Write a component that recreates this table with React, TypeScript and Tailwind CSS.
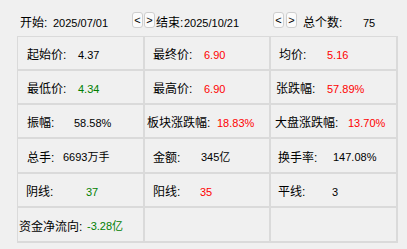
import React from 'react'

interface CellProps {
  label?: string
  value?: string
  color?: string
  pad?: string
  lw?: string
}

const RED = 'text-[#ff0000]'
const GREEN = 'text-[#008000]'
const BLACK = 'text-black'

const cells: CellProps[] = [
  { label: '起始价:', value: '4.37', color: BLACK, pad: 'pl-[9px]', lw: 'w-[51px]' },
  { label: '最终价:', value: '6.90', color: RED, pad: 'pl-[8px]', lw: 'w-[51px]' },
  { label: '均价:', value: '5.16', color: RED, pad: 'pl-[8px]', lw: 'w-[48px]' },

  { label: '最低价:', value: '4.34', color: GREEN, pad: 'pl-[9px]', lw: 'w-[51px]' },
  { label: '最高价:', value: '6.90', color: RED, pad: 'pl-[8px]', lw: 'w-[51px]' },
  { label: '张跌幅:', value: '57.89%', color: RED, pad: 'pl-[5px]', lw: 'w-[51px]' },

  { label: '振幅:', value: '58.58%', color: BLACK, pad: 'pl-[9px]', lw: 'w-[47px]' },
  { label: '板块涨跌幅:', value: '18.83%', color: RED, pad: 'pl-[2px]', lw: 'w-[70px]' },
  { label: '大盘涨跌幅:', value: '13.70%', color: RED, pad: 'pl-[4px]', lw: 'w-[73px]' },

  { label: '总手:', value: '6693万手', color: BLACK, pad: 'pl-[9px]', lw: 'w-[36px]' },
  { label: '金额:', value: '345亿', color: BLACK, pad: 'pl-[8px]', lw: 'w-[48px]' },
  { label: '换手率:', value: '147.08%', color: BLACK, pad: 'pl-[7px]', lw: 'w-[55px]' },

  { label: '阴线:', value: '37', color: GREEN, pad: 'pl-[8px]', lw: 'w-[60px]' },
  { label: '阳线:', value: '35', color: RED, pad: 'pl-[8px]', lw: 'w-[47px]' },
  { label: '平线:', value: '3', color: BLACK, pad: 'pl-[7px]', lw: 'w-[54px]' },

  { label: '资金净流向:', value: '-3.28亿', color: GREEN, pad: 'pl-[1px]', lw: 'w-[68px]' },
  {},
  {},
]

const Cell = ({ c }: { c: CellProps }) => (
  <div className={`flex items-center pt-[4px] border border-[#dadada] whitespace-nowrap ${c.pad ?? ''}`}>
    {c.label && <span className={`${c.lw} shrink-0 text-[12px]`}>{c.label}</span>}
    {c.value && <span className={`text-[11px] ${c.color}`}>{c.value}</span>}
  </div>
)

const Arrow = ({ ch }: { ch: string }) => (
  <div className="mt-[12px] flex h-[16px] w-[11px] items-center justify-center rounded-[3px] border border-[#cfcfcf] bg-[#fbfbfb] text-[11px] leading-none">
    {ch}
  </div>
)

export default function App() {
  return (
    <div
      className="h-[249px] w-[407px] bg-[#f0f0f0] text-black"
      style={{ fontFamily: '"Liberation Sans", "Noto Sans CJK SC", sans-serif' }}
    >
      <div className="flex h-[36px] items-start whitespace-nowrap">
        <span className="ml-[20px] mt-[15px] w-[33px] text-[12px] leading-[16px]">开始:</span>
        <span className="mt-[15px] w-[79px] text-[11px] leading-[16px]">2025/07/01</span>
        <Arrow ch="<" />
        <div className="ml-[1px]"><Arrow ch=">" /></div>
        <span className="ml-[1px] mt-[15px] w-[28px] text-[12px] leading-[16px]">结束:</span>
        <span className="mt-[15px] w-[89px] text-[11px] leading-[16px]">2025/10/21</span>
        <Arrow ch="<" />
        <div className="ml-[2px]"><Arrow ch=">" /></div>
        <span className="ml-[6px] mt-[15px] w-[60px] text-[12px] leading-[16px]">总个数:</span>
        <span className="mt-[15px] text-[11px] leading-[16px]">75</span>
      </div>
      <div className="ml-[17px] grid w-[381px] grid-cols-[127px_126px_127px] grid-rows-[34px_34px_34px_35px_34px_35px] border-r border-b border-[#dadada]">
        {cells.map((c, i) => (
          <Cell key={i} c={c} />
        ))}
      </div>
    </div>
  )
}
